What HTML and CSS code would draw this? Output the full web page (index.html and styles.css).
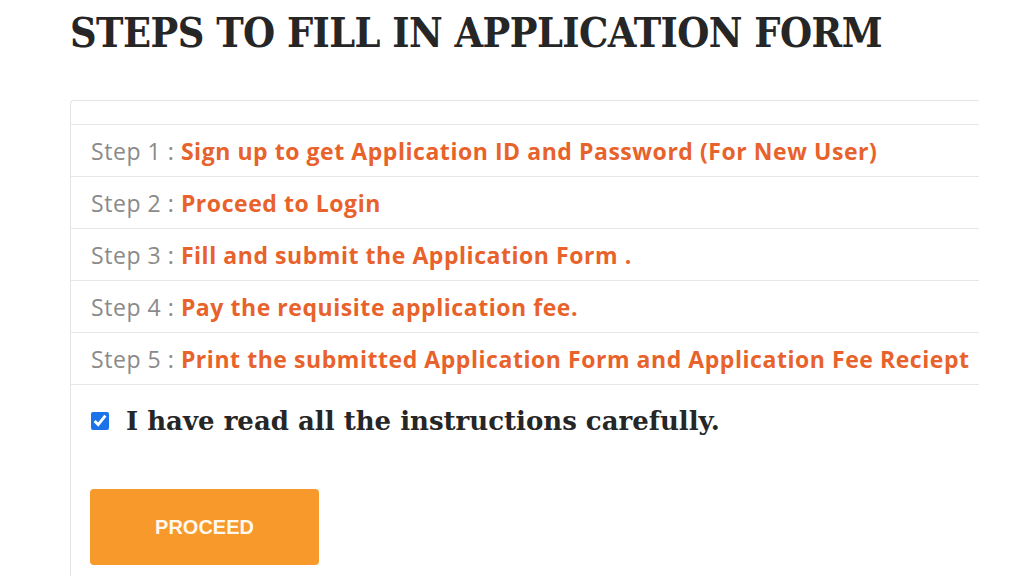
FILE: index.html
```html
<!DOCTYPE html>
<html>
<head>
<meta charset="utf-8">
<link rel="stylesheet" href="styles.css">
</head>
<body>
<div class="page">
  <h1 class="title">STEPS TO FILL IN APPLICATION FORM</h1>
  <div class="card">
    <div class="card-head"></div>
    <ul class="steps">
      <li class="step"><span class="label">Step 1 : </span><span class="text">Sign up to get Application ID and Password (For New User)</span></li>
      <li class="step"><span class="label">Step 2 : </span><span class="text">Proceed to Login</span></li>
      <li class="step"><span class="label">Step 3 : </span><span class="text">Fill and submit the Application Form .</span></li>
      <li class="step"><span class="label">Step 4 : </span><span class="text">Pay the requisite application fee.</span></li>
      <li class="step"><span class="label">Step 5 : </span><span class="text">Print the submitted Application Form and Application Fee Reciept</span></li>
    </ul>
    <label class="agree"><input type="checkbox" class="check" checked><span class="agree-text">I have read all the instructions carefully.</span></label>
    <div class="actions"><button class="btn">PROCEED</button></div>
  </div>
</div>
</body>
</html>
```
FILE: styles.css
```css
html, body { margin: 0; padding: 0; background: #fff; }
body { width: 1024px; height: 576px; overflow: hidden; }
.page { padding-left: 70px; }
.title {
  margin: 0;
  padding-top: 8px;
  height: 100px;
  box-sizing: border-box;
  font-family: "DejaVu Serif", serif;
  font-stretch: condensed;
  font-weight: bold;
  font-size: 41px;
  line-height: 50px;
  color: #262626;
  letter-spacing: -0.55px;
  white-space: nowrap;
}
.card {
  width: 909px;
  border-left: 1px solid #e4e4e4;
  border-top: 1px solid #e4e4e4;
  border-top-left-radius: 4px;
  height: 480px;
  box-sizing: border-box;
}
.card-head { height: 23px; border-bottom: 1px solid #e6e6e6; }
.steps { list-style: none; margin: 0; padding: 0; }
.step {
  height: 51px;
  border-bottom: 1px solid #e6e6e6;
  padding-left: 20px;
  display: flex;
  align-items: center;
  font-family: "Open Sans", sans-serif;
  font-size: 23px;
  letter-spacing: 0.55px;
  white-space: nowrap;
}
.label { color: #8a8a8a; white-space: pre; }
.text { color: #e8622b; font-weight: 700; }
.agree {
  display: flex;
  align-items: center;
  padding-left: 20px;
  height: 72px;
  gap: 17px;
}
.check { width: 18px; height: 18px; margin: 0; accent-color: #1a73e8; }
.agree-text {
  font-family: "DejaVu Serif", serif;
  font-weight: bold;
  font-size: 26px;
  color: #262626;
}
.actions { padding: 32px 0 0 19px; }
.btn {
  width: 229px;
  height: 76px;
  border: none;
  border-radius: 4px;
  background: #f7992b;
  color: #fff8ee;
  font-family: "Liberation Sans", sans-serif;
  font-weight: bold;
  font-size: 20px;
}
```
